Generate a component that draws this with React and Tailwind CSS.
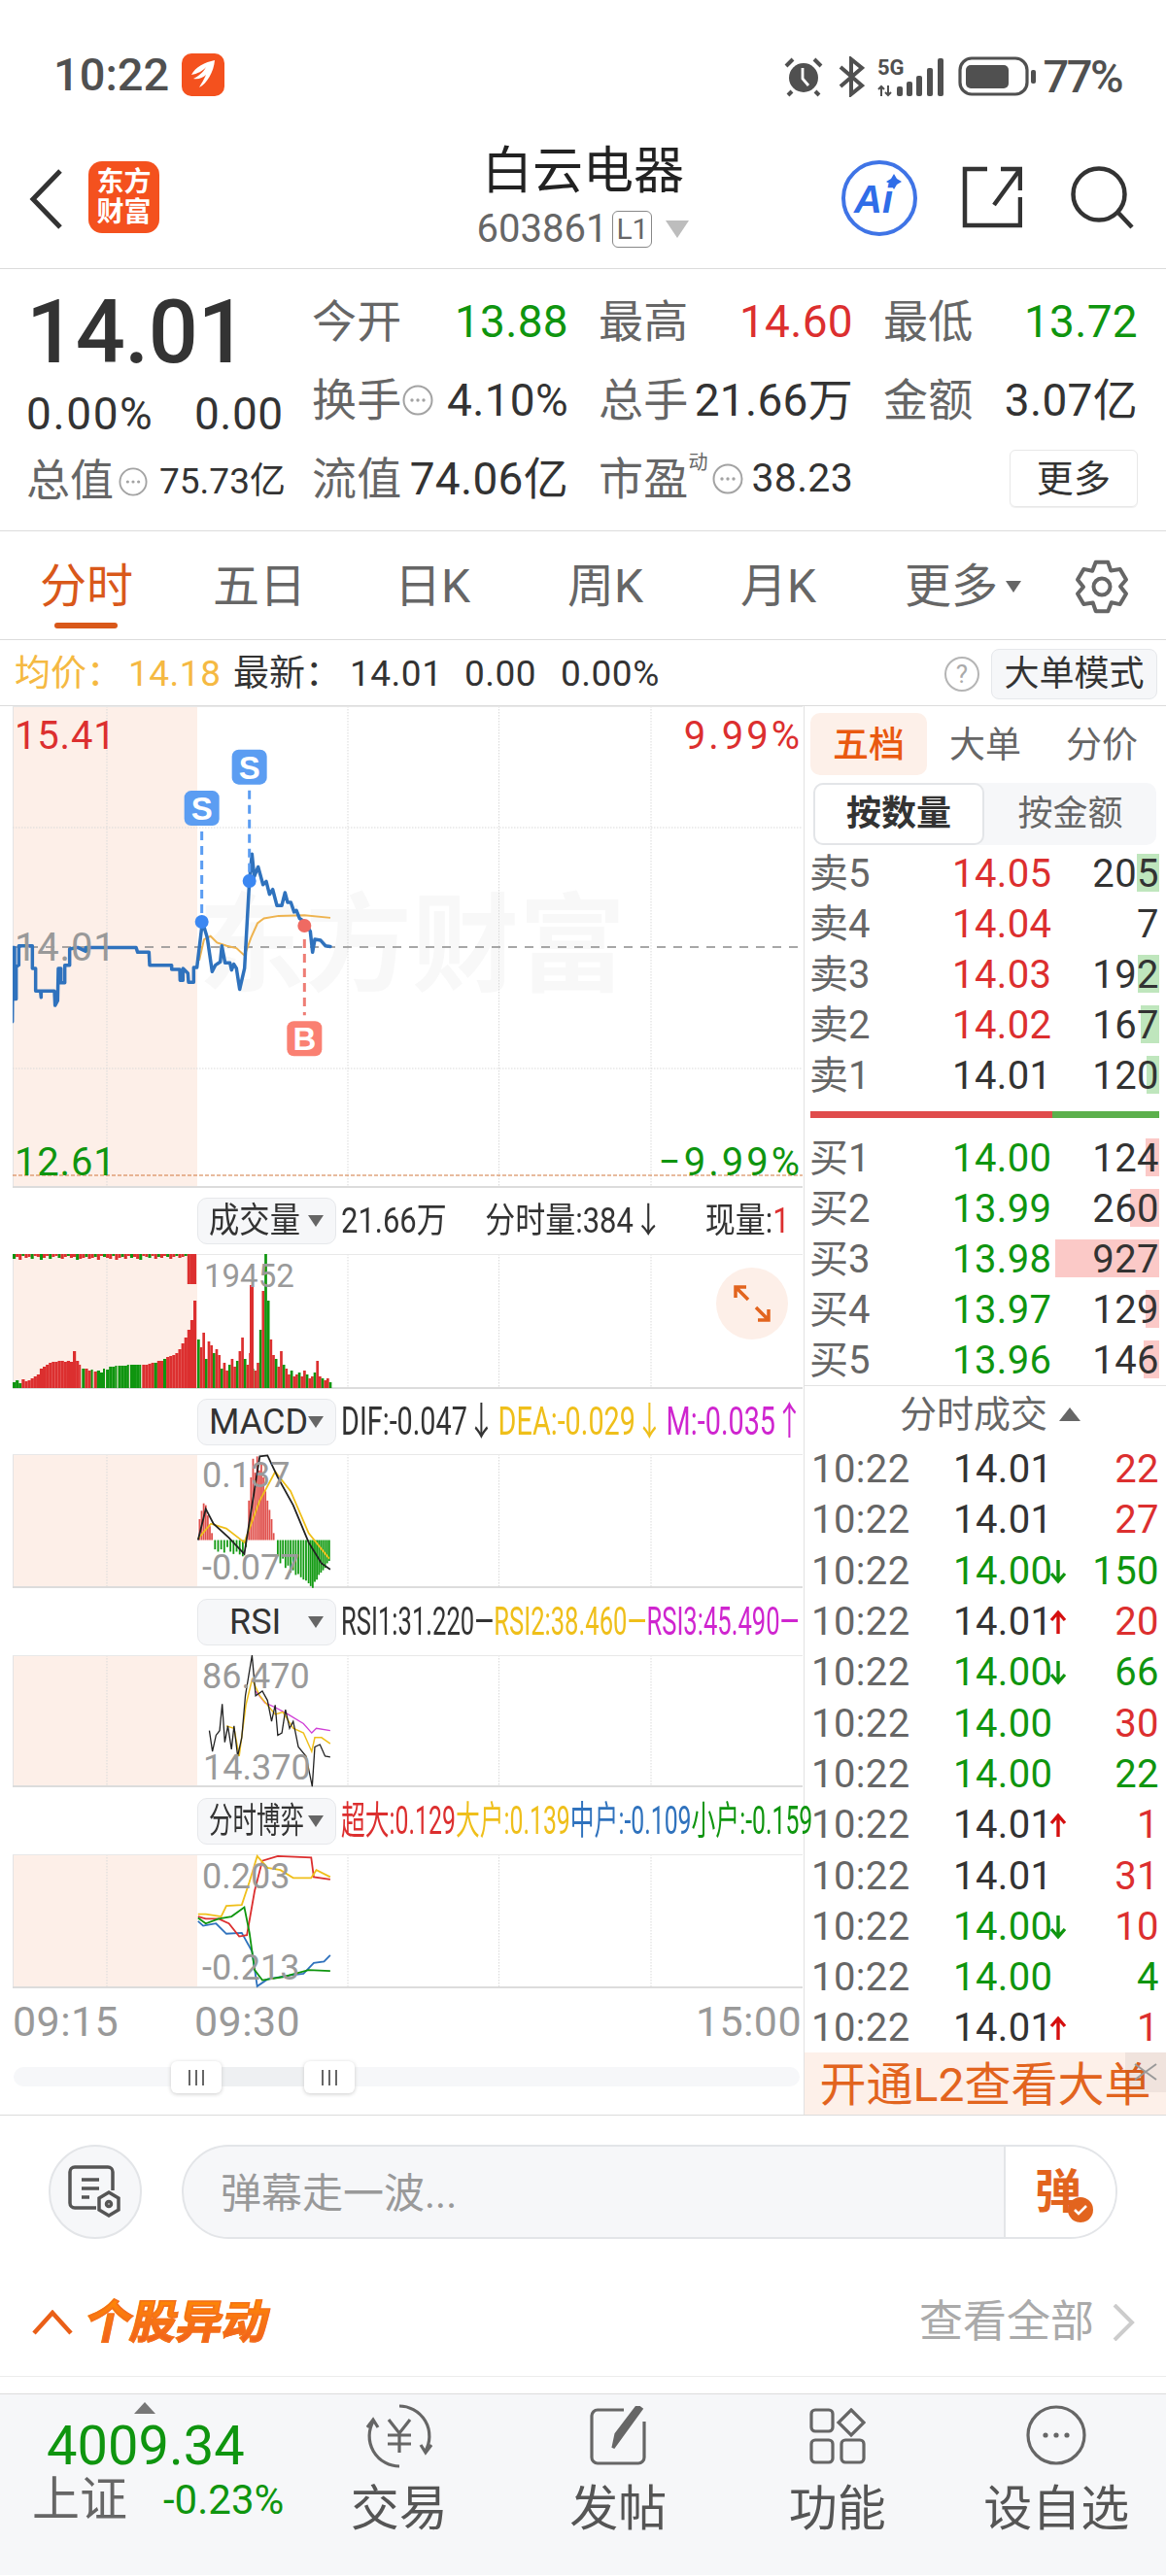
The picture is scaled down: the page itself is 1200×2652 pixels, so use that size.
const RED = "#dc2f2f";
const GREEN = "#0f950f";

const toPts = (arr, sx, sy, ox, oy) =>
  arr.map(([x, y]) => `${x / sx - ox},${y / sy - oy}`).join(" ");

const priceLine = [[38,1000],[40,770],[45,770],[45,930],[50,930],[50,830],[58,825],[58,765],[100,765],[100,835],[110,835],[110,905],[125,905],[127,925],[127,905],[168,905],[170,950],[178,935],[180,835],[188,835],[188,880],[200,880],[200,825],[215,825],[215,775],[240,770],[265,782],[265,770],[420,770],[425,785],[460,785],[462,825],[530,825],[530,838],[555,838],[556,872],[565,872],[565,835],[580,850],[582,878],[598,878],[598,832],[608,832],[625,690],[640,740],[655,845],[665,825],[680,815],[685,765],[695,818],[710,818],[715,840],[722,822],[730,835],[740,900],[755,835],[770,565],[778,480],[785,550],[797,520],[812,575],[822,565],[832,605],[842,590],[855,640],[870,640],[880,600],[888,630],[898,630],[908,660],[915,655],[925,680],[940,690],[958,720],[965,785],[972,745],[990,748],[1005,765],[1020,767]];
const avgLine = [[615,810],[630,745],[650,735],[670,755],[700,765],[730,772],[755,795],[775,740],[795,695],[815,680],[860,672],[940,670],[1020,678]];

const preVol = [6,8,5,9,7,8,10,12,14,20,22,24,26,27,27,28,28,27,28,27,38,28,24,20,20,18,19,17,18,16,20,19,22,22,23,23,23,23,24,24,24,24,24,24,24,25,26,26,28,28,30,32,33,34,36,40,46,52,60,70,90];
const postVol = [50,42,57,30,48,44,36,40,34,20,26,18,24,30,22,28,38,52,30,24,36,20,18,26,60,100,139,90,50,34,30,22,38,24,20,14,18,12,14,16,12,18,14,10,12,16,28,12,10,8,10,6];
const topMarks = [5,3,6,2,4,3,5,2,3,6,4,2,5,3,2,4,5,3,2,4,3,6,5,4,3,5,4,3,6,2,3,4,5,2,6,4,3,5,2,4,3,5,6,2,3,4,2,5,3,4,2,3,5,3,2,4,3,2,31,31,31];

const macdBlack = [[385,325],[400,258],[415,290],[445,320],[475,355],[490,250],[505,145],[520,143],[540,190],[570,250],[600,330],[625,375],[642,388]];
const macdYellow = [[385,322],[410,290],[440,300],[475,330],[505,240],[535,178],[565,220],[600,310],[640,365]];
const macdBars = [[388,280],[392,262],[396,246],[400,250],[404,272],[408,295],[412,310],[418,345],[424,350],[430,345],[436,352],[442,340],[448,350],[454,355],[460,350],[466,356],[472,360],[478,340],[484,240],[488,190],[492,150],[496,180],[500,145],[504,175],[508,160],[512,190],[516,220],[520,240],[524,260],[528,280],[532,310],[540,360],[545,375],[550,365],[555,385],[560,380],[565,395],[570,390],[575,400],[580,398],[585,405],[590,410],[595,412],[600,418],[604,424],[608,428],[612,415],[616,410],[620,400],[624,395],[628,390],[632,385],[636,375],[640,370]];

const rsiBlack = [[407,735],[413,780],[420,745],[427,735],[432,678],[437,760],[443,725],[450,775],[455,725],[462,790],[470,750],[477,660],[490,573],[497,660],[510,650],[520,670],[528,715],[535,680],[540,745],[548,740],[555,690],[563,730],[570,715],[580,770],[595,790],[607,855],[612,770],[622,765],[632,790],[642,792]];
const rsiYellow = [[440,725],[455,730],[465,790],[478,680],[490,625],[505,660],[520,680],[535,700],[550,695],[570,730],[590,740],[606,780],[612,750],[625,750],[642,763]];
const rsiPink = [[497,650],[515,675],[535,685],[560,700],[590,720],[606,740],[615,730],[642,735]];

const gameRed = [[385,1135],[400,1140],[425,1140],[445,1150],[465,1178],[480,1175],[495,1080],[510,1015],[540,1005],[605,1008],[610,1050],[642,1055]];
const gameYellow = [[385,1130],[400,1130],[430,1135],[440,1112],[470,1110],[485,1060],[500,1005],[520,1030],[545,1035],[570,1052],[605,1052],[615,1035],[642,1050]];
const gameBlue = [[385,1145],[395,1155],[420,1150],[440,1172],[470,1170],[490,1210],[500,1285],[520,1270],[560,1262],[590,1258],[610,1235],[630,1232],[642,1218]];
const gameGreen = [[385,1138],[400,1150],[425,1140],[450,1135],[475,1115],[485,1170],[495,1250],[510,1272],[550,1265],[600,1250],[642,1252]];

const sellRows = [
  { label: "卖5", price: "14.05", qty: "205", bar: 23, color: RED },
  { label: "卖4", price: "14.04", qty: "7", bar: 0, color: RED },
  { label: "卖3", price: "14.03", qty: "192", bar: 22, color: RED },
  { label: "卖2", price: "14.02", qty: "167", bar: 19, color: RED },
  { label: "卖1", price: "14.01", qty: "120", bar: 13, color: "#333" },
];
const buyRows = [
  { label: "买1", price: "14.00", qty: "124", bar: 14, color: GREEN },
  { label: "买2", price: "13.99", qty: "260", bar: 30, color: GREEN },
  { label: "买3", price: "13.98", qty: "927", bar: 107, color: GREEN },
  { label: "买4", price: "13.97", qty: "129", bar: 14, color: GREEN },
  { label: "买5", price: "13.96", qty: "146", bar: 16, color: GREEN },
];
const ticks = [
  { price: "14.01", up: true, qty: "22", arrow: "", qtyRed: true },
  { price: "14.01", up: true, qty: "27", arrow: "", qtyRed: true },
  { price: "14.00", up: false, qty: "150", arrow: "down", qtyRed: false },
  { price: "14.01", up: true, qty: "20", arrow: "up", qtyRed: true },
  { price: "14.00", up: false, qty: "66", arrow: "down", qtyRed: false },
  { price: "14.00", up: false, qty: "30", arrow: "", qtyRed: true },
  { price: "14.00", up: false, qty: "22", arrow: "", qtyRed: false },
  { price: "14.01", up: true, qty: "1", arrow: "up", qtyRed: true },
  { price: "14.01", up: true, qty: "31", arrow: "", qtyRed: true },
  { price: "14.00", up: false, qty: "10", arrow: "down", qtyRed: true },
  { price: "14.00", up: false, qty: "4", arrow: "", qtyRed: false },
  { price: "14.01", up: true, qty: "1", arrow: "up", qtyRed: true },
];

// six lobed settings gear
const gearPts = (() => {
  const out = [];
  for (let k = 0; k < 6; k++) {
    const a = k * 60 - 90;
    [[-31, 19], [-14, 26], [14, 26]].forEach(([d, r]) => {
      const t = ((a + d) * Math.PI) / 180;
      out.push(`${(28 + r * Math.cos(t)).toFixed(1)},${(28 + r * Math.sin(t)).toFixed(1)}`);
    });
  }
  return out.join(" ");
})();

function DotsIcon({ size = 32 }) {
  return (
    <svg width={size} height={size} viewBox="0 0 32 32" className="shrink-0">
      <circle cx="16" cy="16" r="14.5" fill="none" stroke="#a3a3a3" strokeWidth="2" />
      <circle cx="10" cy="16" r="1.7" fill="#a3a3a3" />
      <circle cx="16" cy="16" r="1.7" fill="#a3a3a3" />
      <circle cx="22" cy="16" r="1.7" fill="#a3a3a3" />
    </svg>
  );
}

function StatusIcons() {
  return (
    <div className="flex items-center">
      <svg width="40" height="42" viewBox="0 0 40 42">
        <circle cx="20" cy="22" r="15" fill="#505050" />
        <path d="M19 12v11l6 7" fill="none" stroke="#fff" strokeWidth="2.8" />
        <path d="M2 10 9 3M38 10l-7-7M8 36l-4 4M32 36l4 4" stroke="#505050" strokeWidth="4" fill="none" />
      </svg>
      <svg width="28" height="42" viewBox="0 0 28 42" className="ml-[15px]">
        <path d="M3 11 25 30 14 39V3l11 9L3 31" fill="none" stroke="#505050" strokeWidth="4" />
      </svg>
      <svg width="70" height="42" viewBox="0 0 70 42" className="ml-[13px]">
        <text x="0" y="19" fontSize="22" fontWeight="700" fill="#505050" fontFamily="Roboto">5G</text>
        <path d="M4 41V31M1 34l3-3 3 3M11 30v10M8 37l3 3 3-3" fill="none" stroke="#505050" strokeWidth="2" />
        <rect x="20" y="31" width="6" height="10" rx="2" fill="#505050" />
        <rect x="30" y="26" width="6" height="15" rx="2" fill="#505050" />
        <rect x="40" y="20" width="6" height="21" rx="2" fill="#505050" />
        <rect x="51" y="12" width="6" height="29" rx="2" fill="#505050" />
        <rect x="62" y="2" width="6" height="39" rx="2" fill="#505050" />
      </svg>
      <svg width="80" height="42" viewBox="0 0 80 42" className="ml-[13px]">
        <rect x="2" y="2" width="69" height="37" rx="12" fill="none" stroke="#505050" strokeWidth="3.2" />
        <rect x="8" y="9" width="44" height="24" rx="5" fill="#505050" />
        <rect x="75" y="14" width="5" height="14" rx="2" fill="#505050" />
      </svg>
      <span className="ml-[7px] text-[47px] font-medium leading-none tracking-[-2.5px] text-[#505050]">77%</span>
    </div>
  );
}

function Pane({ h, children }) {
  return (
    <svg width="813" height={h} viewBox={`0 0 813 ${h}`} className="relative block">
      <rect x="0" y="0" width="190" height={h} fill="#fdefe8" />
      {[97, 345, 500.5, 657].map((x) => (
        <line key={x} x1={x} y1="0" x2={x} y2={h} stroke="#d9d9d9" strokeWidth="1" strokeDasharray="1.5 1.5" />
      ))}
      <line x1="0.5" y1="0" x2="0.5" y2={h} stroke="#e4e4e4" />
      <line x1="0" y1="0.5" x2="813" y2="0.5" stroke="#e8e8e8" />
      <line x1="0" y1={h - 1} x2="813" y2={h - 1} stroke="#dcdcdc" strokeWidth="2" />
      {children}
    </svg>
  );
}

function Marker({ x, y, letter, color }) {
  return (
    <g>
      <rect x={x - 18} y={y - 18} width="36" height="36" rx="7" fill={color} />
      <text x={x} y={y + 12} textAnchor="middle" fontSize="33" fontWeight="700" fill="#fff" fontFamily="Liberation Sans">
        {letter}
      </text>
    </g>
  );
}

function MainChart() {
  const local = (x, y) => [x / 3 - 13, y / 3.015 - 7];
  const s1 = local(623, 338);
  const s2 = local(770, 210);
  const b = local(940, 1053);
  return (
    <div className="relative ml-[13px] h-[496px] w-[813px]">
      <span className="absolute left-[191px] top-[193px] text-[110px] font-bold leading-none text-[#f8f8f8]">东方财富</span>
      <Pane h={496}>
        {[125, 373].map((y) => (
          <line key={y} x1="0" y1={y} x2="813" y2={y} stroke="#d9d9d9" strokeDasharray="1.5 1.5" />
        ))}
        <line x1="0" y1="248" x2="813" y2="248" stroke="#8a8a8a" strokeWidth="1.5" strokeDasharray="9 8" />
        <line x1="0" y1="483" x2="813" y2="483" stroke="#d2793f" strokeWidth="1.2" strokeDasharray="4 2" />
        <polyline points={toPts(avgLine, 3, 3.015, 13, 7)} fill="none" stroke="#eeb34f" strokeWidth="2" />
        <polyline points={toPts(priceLine, 3, 3.015, 13, 7)} fill="none" stroke="#2f72bd" strokeWidth="3.5" strokeLinejoin="round" strokeLinecap="round" />
        <line x1={s1[0]} y1={s1[1] + 24} x2={s1[0]} y2="222" stroke="#5b9df2" strokeWidth="3" strokeDasharray="9 6" />
        <line x1={s2[0]} y1={s2[1] + 24} x2={s2[0]} y2="180" stroke="#5b9df2" strokeWidth="3" strokeDasharray="9 6" />
        <line x1={b[0]} y1="240" x2={b[0]} y2={b[1] - 24} stroke="#ee7d75" strokeWidth="3" strokeDasharray="9 6" />
        <circle cx={s1[0]} cy="222" r="7" fill="#3b87f2" />
        <circle cx={s2[0]} cy="180" r="7" fill="#3b87f2" />
        <circle cx={b[0]} cy="226" r="7" fill="#ef6a62" />
        <Marker x={s1[0]} y={s1[1]} letter="S" color="#5b9df2" />
        <Marker x={s2[0]} y={s2[1]} letter="S" color="#5b9df2" />
        <Marker x={b[0]} y={b[1]} letter="B" color="#fa8072" />
      </Pane>
      <span className="absolute left-[2px] top-[9px] text-[40px] leading-[44px] tracking-[0.8px] text-[#dc2f2f]">15.41</span>
      <span className="absolute right-0 top-[9px] text-[40px] leading-[44px] tracking-[3px] text-[#dc2f2f]">9.99%</span>
      <span className="absolute left-[2px] top-[227px] text-[40px] leading-[44px] tracking-[0.8px] text-[#999]">14.01</span>
      <span className="absolute left-[2px] top-[448px] text-[40px] leading-[44px] tracking-[0.8px] text-[#0f950f]">12.61</span>
      <span className="absolute right-0 top-[448px] text-[40px] leading-[44px] tracking-[3px] text-[#0f950f]">−9.99%</span>
    </div>
  );
}

function VolumeChart() {
  const h = 139;
  return (
    <div className="relative ml-[13px] h-[139px] w-[813px]">
      <Pane h={h}>
        {topMarks.map((v, i) => (
          <rect key={i} x={i * 3.1} y="0" width="3.1" height={v} fill={i % 3 === 0 && v < 31 ? GREEN : RED} />
        ))}
        {preVol.map((v, i) => (
          <rect
            key={i}
            x={i * 3.1}
            y={h - 1 - v}
            width={i >= 21 && i <= 42 && i % 4 === 2 ? 2 : 3.2}
            height={v}
            fill={(i >= 28 && i <= 42) || i < 3 || i === 23 || i === 26 || i === 47 || i === 50 ? GREEN : RED}
          />
        ))}
        {postVol.map((v, i) => (
          <rect
            key={i}
            x={190 + i * 2.66}
            y={h - 1 - v}
            width="2.7"
            height={v}
            fill={(i * 7) % 3 === 0 || i === 26 ? GREEN : RED}
          />
        ))}
        <rect x="244" y="32" width="4" height="106" fill={RED} />
      </Pane>
      <span className="absolute left-[197px] top-[3px] text-[33px] leading-[40px] text-[#9a9a9a]">19452</span>
      <div className="absolute left-[724px] top-[14px] flex h-[74px] w-[74px] items-center justify-center rounded-full bg-[#fdefe8]">
        <svg width="40" height="40" viewBox="0 0 40 40">
          <path d="M3 14V3h11M3 3l13 13M37 26v11H26M37 37 24 24" fill="none" stroke="#e2641e" strokeWidth="3.5" />
        </svg>
      </div>
    </div>
  );
}

function SubBar({ label, labelClass, h, children }) {
  return (
    <div className={`flex items-center pl-[203px] ${h}`}>
      <div className="flex h-[48px] w-[143px] shrink-0 items-center rounded-[10px] border border-[#e6e8eb] bg-[#f6f7f9] pl-[11px] pr-[9px]">
        <div className="w-[98px] shrink-0 whitespace-nowrap">
          <span className={`block w-fit text-[36px] leading-none text-[#333] ${labelClass}`}>{label}</span>
        </div>
        <svg width="16" height="12" viewBox="0 0 16 12" className="ml-[4px] shrink-0">
          <path d="M0 0h16L8 12z" fill="#666" />
        </svg>
      </div>
      <div className="ml-[5px] min-w-0 flex-1">{children}</div>
    </div>
  );
}

function SqueezedRow({ className, items }) {
  return (
    <div className={`flex w-max origin-left items-center whitespace-nowrap leading-none ${className}`}>
      {items.map((it, i) => (
        <span key={i} style={{ color: it.c, marginLeft: it.ml || 0 }}>
          {it.t}
        </span>
      ))}
    </div>
  );
}

function MacdChart() {
  return (
    <div className="relative ml-[13px] h-[138px] w-[813px]">
      <Pane h={138}>
        {macdBars.map(([x, y]) => {
          const lx = x / 1.889 - 13;
          const ly = y / 2.09 - 67;
          const zero = 325 / 2.09 - 67;
          return (
            <line
              key={x}
              x1={lx}
              x2={lx}
              y1={zero}
              y2={ly}
              stroke={y < 325 ? "#e0504c" : "#129a12"}
              strokeWidth="1.8"
            />
          );
        })}
        <polyline points={toPts(macdYellow, 1.889, 2.09, 13, 67)} fill="none" stroke="#efbf1a" strokeWidth="1.8" />
        <polyline points={toPts(macdBlack, 1.889, 2.09, 13, 67)} fill="none" stroke="#222" strokeWidth="1.8" />
      </Pane>
      <span className="absolute left-[195px] top-[2px] text-[36px] leading-[40px] text-[#9a9a9a]">0.137</span>
      <span className="absolute left-[195px] top-[97px] text-[36px] leading-[40px] text-[#9a9a9a]">-0.077</span>
    </div>
  );
}

function RsiChart() {
  return (
    <div className="relative ml-[13px] h-[136px] w-[813px]">
      <Pane h={136}>
        <polyline points={toPts(rsiPink, 1.889, 2.09, 13, 274)} fill="none" stroke="#cf3fd6" strokeWidth="1.3" />
        <polyline points={toPts(rsiYellow, 1.889, 2.09, 13, 274)} fill="none" stroke="#efbf1a" strokeWidth="1.5" />
        <polyline points={toPts(rsiBlack, 1.889, 2.09, 13, 274)} fill="none" stroke="#222" strokeWidth="1.3" />
      </Pane>
      <span className="absolute left-[195px] top-[2px] text-[36px] leading-[40px] text-[#9a9a9a]">86.470</span>
      <span className="absolute left-[196px] top-[96px] text-[36px] leading-[40px] text-[#9a9a9a]">14.370</span>
    </div>
  );
}

function GameChart() {
  return (
    <div className="relative ml-[13px] h-[138px] w-[813px]">
      <Pane h={138}>
        <polyline points={toPts(gameBlue, 1.889, 2.09, 13, 479)} fill="none" stroke="#2f72bd" strokeWidth="1.8" />
        <polyline points={toPts(gameRed, 1.889, 2.09, 13, 479)} fill="none" stroke="#dc2f2f" strokeWidth="1.8" />
        <polyline points={toPts(gameYellow, 1.889, 2.09, 13, 479)} fill="none" stroke="#efbf1a" strokeWidth="1.8" />
        <polyline points={toPts(gameGreen, 1.889, 2.09, 13, 479)} fill="none" stroke="#0f950f" strokeWidth="1.8" />
      </Pane>
      <span className="absolute left-[195px] top-[3px] text-[36px] leading-[40px] text-[#9a9a9a]">0.203</span>
      <span className="absolute left-[195px] top-[97px] text-[36px] leading-[40px] text-[#9a9a9a]">-0.213</span>
    </div>
  );
}

function DepthRow({ row }) {
  return (
    <div className="relative flex h-[52px] items-center pl-[5px] pr-[7px] pt-[2px] text-[40px] leading-none">
      {row.bar > 0 && (
        <div
          className={`absolute right-[7px] top-[6px] h-[39px] ${row.label[0] === "卖" ? "bg-[#bfe6bd]" : "bg-[#fbc9c7]"}`}
          style={{ width: row.bar }}
        />
      )}
      <span className="relative w-[147px] text-[#666]">{row.label}</span>
      <span className="relative tracking-[0.4px]" style={{ color: row.color }}>{row.price}</span>
      <span className="relative ml-auto tracking-[0.4px] text-[#333]">{row.qty}</span>
    </div>
  );
}

function TickArrow({ dir }) {
  if (!dir) return <span className="w-[18px]" />;
  const color = dir === "up" ? "#d50f0f" : GREEN;
  return (
    <svg width="18" height="26" viewBox="0 0 18 26">
      {dir === "up" ? (
        <path d="M9 25V3M2 11l7-8 7 8" fill="none" stroke={color} strokeWidth="3.4" />
      ) : (
        <path d="M9 1v22M2 15l7 8 7-8" fill="none" stroke={color} strokeWidth="3.4" />
      )}
    </svg>
  );
}

export default function App() {
  return (
    <div className="h-[2652px] w-[1200px] bg-white font-[family-name:Roboto,'Noto_Sans_CJK_SC',sans-serif] text-[#333]">
      {/* status bar */}
      <div className="flex h-[130px] items-start justify-between pl-[55px] pr-[46px] pt-[55px]">
        <div className="flex items-center">
          <span className="text-[47px] font-medium leading-[44px] text-[#505050]">10:22</span>
          <div className="ml-[13px] flex h-[44px] w-[44px] items-center justify-center rounded-[10px] bg-[#f4511e]">
            <svg width="30" height="32" viewBox="0 0 30 32">
              <path d="M27 1C17 3 7 8 3 16c6-1 12-4 15-8-3 6-9 10-13 12 5 1 10-1 13-4-2 5-5 9-7 13 8-4 15-16 16-28z" fill="#fff" />
            </svg>
          </div>
        </div>
        <StatusIcons />
      </div>

      {/* header */}
      <div className="grid h-[147px] grid-cols-[1fr_auto_1fr] border-b border-[#dcdcdc]">
        <div className="flex items-start pl-[30px] pt-[36px]">
          <svg width="36" height="62" viewBox="0 0 36 62" className="mt-[8px]">
            <path d="M32 2 4 31l28 29" fill="none" stroke="#333" strokeWidth="5" />
          </svg>
          <div className="ml-[25px] flex h-[74px] w-[73px] flex-col items-center justify-center rounded-[14px] bg-[#f4511e] text-[28px] font-bold leading-[31px] text-white">
            <span>东方</span>
            <span>财富</span>
          </div>
        </div>
        <div className="flex flex-col items-center pt-[19px]">
          <span className="text-[52px] leading-[56px] text-[#222]">白云电器</span>
          <div className="mt-[9px] flex items-center">
            <span className="text-[40px] leading-[44px] text-[#666]">603861</span>
            <span className="ml-[5px] rounded-[6px] border border-[#888] px-[3px] text-[30px] leading-[36px] text-[#666]">L1</span>
            <svg width="24" height="18" viewBox="0 0 24 18" className="ml-[14px]">
              <path d="M0 0h24L12 18z" fill="#bdbdbd" />
            </svg>
          </div>
        </div>
        <div className="flex items-start justify-end pr-[32px] pt-[34px]">
          <svg width="78" height="80" viewBox="0 0 78 80">
            <circle cx="39" cy="40" r="37" fill="none" stroke="#3f74e6" strokeWidth="4" />
            <text x="13" y="55" fontSize="40" fontWeight="900" fontStyle="italic" fill="#2f6de8" fontFamily="Liberation Sans">Ai</text>
            <path d="M54 15l3 5 5 3-5 3-3 5-3-5-5-3 5-3z" fill="#2f6de8" />
          </svg>
          <svg width="62" height="64" viewBox="0 0 62 64" className="ml-[46px] mt-[7px]">
            <path d="M26 3H3v58h57V32M60 3 33 40M40 3h20v22" fill="none" stroke="#333" strokeWidth="4.5" />
          </svg>
          <svg width="66" height="66" viewBox="0 0 66 66" className="ml-[50px] mt-[7px]">
            <circle cx="29" cy="29" r="26.5" fill="none" stroke="#333" strokeWidth="4.5" />
            <path d="M48 47 63 63" stroke="#333" strokeWidth="4.5" />
          </svg>
        </div>
      </div>

      {/* quote */}
      <div className="flex h-[270px] border-b border-[#dcdcdc] leading-none">
        <div className="w-[321px] pl-[27px] pt-[25px]">
          <div className="text-[90px] font-medium leading-[82px] tracking-[-0.5px] text-[#333]">14.01</div>
          <div className="mt-[18px] flex text-[46px] leading-[48px]">
            <span className="w-[173px] tracking-[1.6px]">0.00%</span>
            <span className="tracking-[0.5px]">0.00</span>
          </div>
          <div className="mt-[22px] flex items-center text-[#666]">
            <span className="text-[45px] leading-[48px]">总值</span>
            <span className="ml-[5px]"><DotsIcon size={30} /></span>
            <span className="ml-[12px] text-[37px] leading-[48px] text-[#333]">75.73亿</span>
          </div>
        </div>
        <div className="grid w-[849px] grid-cols-[264px_262px_262px] grid-rows-[81px_81px_81px] gap-x-[31px] pt-[13px] text-[46px] tracking-[0.3px]">
          <div className="flex items-center justify-between">
            <span className="text-[#666]">今开</span>
            <span className="text-[#0f950f]">13.88</span>
          </div>
          <div className="flex items-center justify-between">
            <span className="text-[#666]">最高</span>
            <span className="text-[#dc2f2f]">14.60</span>
          </div>
          <div className="flex items-center justify-between">
            <span className="text-[#666]">最低</span>
            <span className="text-[#0f950f]">13.72</span>
          </div>
          <div className="flex items-center">
            <span className="text-[#666]">换手</span>
            <DotsIcon />
            <span className="ml-auto">4.10%</span>
          </div>
          <div className="flex items-center justify-between">
            <span className="text-[#666]">总手</span>
            <span>21.66万</span>
          </div>
          <div className="flex items-center justify-between">
            <span className="text-[#666]">金额</span>
            <span>3.07亿</span>
          </div>
          <div className="flex items-center justify-between">
            <span className="text-[#666]">流值</span>
            <span>74.06亿</span>
          </div>
          <div className="flex items-center">
            <span className="text-[#666]">市盈</span>
            <span className="mb-[34px] w-[24px] text-[20px] text-[#666]">动</span>
            <DotsIcon />
            <span className="ml-auto text-[41px]">38.23</span>
          </div>
          <div className="flex items-center justify-end">
            <div className="flex h-[59px] w-[132px] items-center justify-center rounded-[6px] border border-[#e8e8e8] text-[38px] shadow-[0_1px_1px_#eee]">更多</div>
          </div>
        </div>
      </div>

      {/* tabs */}
      <div className="grid h-[112px] grid-cols-[178px_178px_178px_178px_178px_178px_1fr] items-center border-b border-[#dcdcdc] pt-[3px] text-[48px] text-[#666]">
        <div className="relative text-center text-[#d9581a]">
          分时
          <div className="absolute left-[56px] top-[73px] h-[6px] w-[65px] rounded-full bg-[#d9581a]" />
        </div>
        <div className="text-center">五日</div>
        <div className="text-center">日K</div>
        <div className="text-center">周K</div>
        <div className="text-center">月K</div>
        <div className="flex items-center justify-center pl-[24px]">
          更多
          <svg width="16" height="12" viewBox="0 0 16 12" className="ml-[8px]">
            <path d="M0 0h16L8 12z" fill="#666" />
          </svg>
        </div>
        <svg width="56" height="56" viewBox="0 0 56 56" fill="none" stroke="#666" strokeWidth="4" strokeLinejoin="round" className="ml-[38px]">
          <polygon points={gearPts} />
          <circle cx="28" cy="28" r="8.5" />
        </svg>
      </div>

      {/* info row */}
      <div className="flex h-[68px] items-center border-b border-[#dcdcdc] pl-[15px] pr-[9px] pt-[2px] text-[37px] leading-none">
        <span className="w-[117px] text-[#f5b942]">均价：</span>
        <span className="w-[108px] tracking-[0.5px] text-[#f5b942]">14.18</span>
        <span className="w-[120px]">最新：</span>
        <span className="w-[118px] tracking-[0.5px]">14.01</span>
        <span className="w-[99px] tracking-[0.5px]">0.00</span>
        <span className="tracking-[0.5px]">0.00%</span>
        <div className="ml-auto flex h-[36px] w-[36px] items-center justify-center rounded-full border-2 border-[#b5b5b5] text-[26px] text-[#aaa]">?</div>
        <div className="ml-[12px] flex h-[52px] w-[171px] items-center justify-center rounded-[8px] border border-[#e6e8eb] bg-[#f6f7f9] text-[36px]">大单模式</div>
      </div>

      {/* body */}
      <div className="flex h-[1451px] border-b border-[#dcdcdc]">
        <div className="w-[827px] shrink-0">
          <MainChart />
          <SubBar label="成交量" labelClass="origin-left scale-x-[0.87]" h="h-[68px]">
            <SqueezedRow
              className="scale-x-[0.86] text-[36px]"
              items={[
                { t: "21.66万", c: "#333" },
                { t: "分时量:384↓", c: "#333", ml: 46 },
                { t: "现量:", c: "#333", ml: 50 },
                { t: "1", c: RED },
              ]}
            />
          </SubBar>
          <VolumeChart />
          <SubBar label="MACD" h="h-[67px]">
            <SqueezedRow
              className="scale-x-[0.72] text-[40px]"
              items={[
                { t: "DIF:-0.047↓", c: "#333" },
                { t: "DEA:-0.029↓", c: "#efbf1a", ml: 4 },
                { t: "M:-0.035↑", c: "#cf25cf", ml: 4 },
              ]}
            />
          </SubBar>
          <MacdChart />
          <SubBar label="RSI" labelClass="ml-[21px]" h="h-[69px]">
            <SqueezedRow
              className="scale-x-[0.64] text-[40px]"
              items={[
                { t: "RSI1:31.220—", c: "#333" },
                { t: "RSI2:38.460—", c: "#efbf1a" },
                { t: "RSI3:45.490—", c: "#cf25cf" },
              ]}
            />
          </SubBar>
          <RsiChart />
          <SubBar label="分时博弈" labelClass="origin-left scale-x-[0.68]" h="h-[69px]">
            <SqueezedRow
              className="scale-x-[0.62] text-[40px]"
              items={[
                { t: "超大:0.129", c: RED },
                { t: "大户:0.139", c: "#efbf1a" },
                { t: "中户:-0.109", c: "#2f72bd" },
                { t: "小户:-0.159", c: GREEN },
              ]}
            />
          </SubBar>
          <GameChart />

          {/* time axis */}
          <div className="flex h-[68px] items-center pl-[13px] pr-[2px] text-[43px] leading-none tracking-[0.4px] text-[#999]">
            <span className="w-[187px]">09:15</span>
            <span>09:30</span>
            <span className="ml-auto">15:00</span>
          </div>
          <div className="relative ml-[14px] mt-[13px] h-[20px] w-[809px] rounded-full bg-[#f6f7f9]">
            <div className="absolute left-[188px] top-0 h-[20px] w-[136px] bg-[#eef0f2]" />
            {[162, 299].map((x) => (
              <div
                key={x}
                className="absolute top-[-6px] flex h-[33px] w-[52px] items-center justify-center gap-[5px] rounded-[6px] bg-white shadow-[0_1px_4px_#ccc]"
                style={{ left: x }}
              >
                <span className="h-[16px] w-[2px] bg-[#666]" />
                <span className="h-[16px] w-[2px] bg-[#666]" />
                <span className="h-[16px] w-[2px] bg-[#666]" />
              </div>
            ))}
          </div>
        </div>

        {/* order book */}
        <div className="flex w-[373px] flex-col border-l border-[#e2e2e2]">
          <div className="flex h-[75px] items-start pl-[6px] pt-[7px] text-[37px] leading-none text-[#666]">
            <div className="flex h-[64px] w-[120px] items-center justify-center rounded-[10px] bg-[#fdf0e9] pt-[2px] font-medium text-[#e9590f]">五档</div>
            <div className="flex h-[64px] w-[120px] items-center justify-center pt-[2px]">大单</div>
            <div className="flex h-[64px] w-[120px] items-center justify-center pt-[2px]">分价</div>
          </div>
          <div className="ml-[9px] mt-[4px] flex h-[64px] w-[353px] rounded-[10px] bg-[#f6f7f9] text-[36px] leading-none">
            <div className="flex w-[176px] items-center justify-center rounded-[10px] border-2 border-[#e3e5e8] bg-white font-bold text-[#333]">按数量</div>
            <div className="flex flex-1 items-center justify-center text-[#666]">按金额</div>
          </div>
          <div className="mt-[3px]">
            {sellRows.map((row) => (
              <DepthRow key={row.label} row={row} />
            ))}
          </div>
          <div className="ml-[6px] mt-[11px] flex h-[7px] w-[359px]">
            <div className="w-[249px] bg-[#e04c4c]" />
            <div className="flex-1 bg-[#5cb04c]" />
          </div>
          <div className="mt-[15px]">
            {buyRows.map((row) => (
              <DepthRow key={row.label} row={row} />
            ))}
          </div>
          <div className="flex h-[59px] items-center justify-center border-t border-[#e2e2e2] pl-[10px] text-[38px] leading-none text-[#666]">
            分时成交
            <svg width="22" height="14" viewBox="0 0 22 14" className="ml-[12px]">
              <path d="M11 0l11 14H0z" fill="#666" />
            </svg>
          </div>
          <div className="flex flex-col">
            {ticks.map((t, i) => (
              <div key={i} className="flex h-[52.3px] items-center pl-[7px] pr-[7px] pt-[4px] text-[40px] leading-none">
                <span className="w-[146px] tracking-[0.4px] text-[#666]">10:22</span>
                <span className="w-[99px] tracking-[0.4px]" style={{ color: t.up ? "#333" : GREEN }}>{t.price}</span>
                <TickArrow dir={t.arrow} />
                <span className="ml-auto tracking-[0.4px]" style={{ color: t.qtyRed ? RED : GREEN }}>{t.qty}</span>
              </div>
            ))}
          </div>
          <div className="relative flex flex-1 items-center justify-center bg-[#fdf0e9] pt-[4px] text-[48px] leading-none text-[#e2641e]">
            开通L2查看大单
            <div className="absolute right-0 top-0 flex h-[41px] w-[42px] items-center justify-center bg-black/5">
              <svg width="26" height="18" viewBox="0 0 26 18">
                <path d="M2 1l22 16M24 1 2 17" stroke="#999" strokeWidth="2" />
              </svg>
            </div>
          </div>
        </div>
      </div>

      {/* danmu input */}
      <div className="flex h-[150px] items-start pl-[50px] pt-[30px]">
        <div className="flex h-[97px] w-[96px] items-center justify-center rounded-full border-2 border-[#e3e5e8] bg-[#f6f7f9]">
          <svg width="58" height="56" viewBox="0 0 58 56" fill="none" stroke="#555" strokeWidth="3.5">
            <path d="M30 44H8a5 5 0 0 1-5-5V7a5 5 0 0 1 5-5h34a5 5 0 0 1 5 5v19" />
            <path d="M15 15h18M15 24h18M15 33h8" />
            <path d="M43 28l10 6v12l-10 6-10-6V34z" />
            <circle cx="43" cy="40" r="2.5" />
          </svg>
        </div>
        <div className="ml-[41px] flex h-[97px] w-[963px] items-stretch rounded-full border-2 border-[#e3e5e8] bg-[#f6f7f9]">
          <span className="flex flex-1 items-center pl-[38px] pt-[4px] text-[42px] leading-none text-[#999]">弹幕走一波...</span>
          <div className="relative flex w-[115px] items-center rounded-r-full border-l-2 border-[#e3e5e8] bg-white pl-[30px]">
            <span className="text-[48px] font-bold leading-none text-[#e2641e]">弹</span>
            <div className="absolute left-[64px] top-[52px] flex h-[26px] w-[26px] items-center justify-center rounded-full bg-[#e2641e]">
              <svg width="16" height="14" viewBox="0 0 16 14">
                <path d="M2 7l4 4 8-8" fill="none" stroke="#fff" strokeWidth="2.6" />
              </svg>
            </div>
          </div>
        </div>
      </div>

      {/* section title */}
      <div className="flex h-[119px] items-start justify-between border-b border-[#ececec] pl-[33px] pr-[32px] pt-[36px]">
        <div className="flex items-center">
          <svg width="42" height="26" viewBox="0 0 42 26">
            <path d="M2 24 21 3l19 21" fill="none" stroke="#ea5f17" strokeWidth="4.5" />
          </svg>
          <span className="ml-[14px] -skew-x-12 bg-linear-to-b from-[#ff8a00] to-[#ef5a1c] bg-clip-text text-[47px] font-bold leading-[54px] text-transparent [-webkit-text-stroke:1.5px_#f4701a]">个股异动</span>
        </div>
        <div className="flex items-center">
          <span className="text-[45px] leading-[54px] text-[#aaa]">查看全部</span>
          <svg width="24" height="38" viewBox="0 0 24 38" className="ml-[18px]">
            <path d="M3 1l18 18L3 37" fill="none" stroke="#ccc" strokeWidth="4" />
          </svg>
        </div>
      </div>

      <div className="h-[17px]" />

      {/* bottom bar */}
      <div className="grid h-[187px] grid-cols-[298px_1fr_1fr_1fr_1fr] border-t border-[#dcdcdc] bg-[#f6f7f9]">
        <div className="relative pl-[33px]">
          <svg width="22" height="12" viewBox="0 0 22 12" className="absolute left-[138px] top-[8px]">
            <path d="M11 0l11 12H0z" fill="#777" />
          </svg>
          <div className="ml-[15px] mt-[25px] text-[56px] leading-[56px] text-[#0f950f]">4009.34</div>
          <div className="mt-[1px] flex items-center">
            <span className="text-[49px] leading-[54px] text-[#666]">上证</span>
            <span className="ml-[37px] text-[42px] leading-none text-[#0f950f]">-0.23%</span>
          </div>
        </div>
        <div className="flex flex-col items-center pt-[10px]">
          <svg width="72" height="66" viewBox="0 0 72 66" fill="none" stroke="#666" strokeWidth="3.2">
            <path d="M36 2a31 31 0 0 1 27 46M36 64A31 31 0 0 1 9 18" />
            <path d="M3 24l6-8 5 8M69 42l-6 8-5-8" />
            <path d="M25 16l11 14 11-14M36 30v20M24 32h24M24 41h24" />
          </svg>
          <span className="mt-[17px] text-[50px] leading-[50px] text-[#555]">交易</span>
        </div>
        <div className="flex flex-col items-center pt-[12px]">
          <svg width="60" height="62" viewBox="0 0 60 62" fill="none" stroke="#666" strokeWidth="3.2">
            <path d="M36 4H9a6 6 0 0 0-6 6v43a6 6 0 0 0 6 6h42a6 6 0 0 0 6-6V16" />
            <path d="M54 3 25 43l3-14L50 0z" fill="#666" />
          </svg>
          <span className="mt-[19px] text-[50px] leading-[50px] text-[#555]">发帖</span>
        </div>
        <div className="flex flex-col items-center pt-[14px]">
          <svg width="58" height="58" viewBox="0 0 58 58" fill="none" stroke="#666" strokeWidth="3.2">
            <rect x="2" y="2" width="22" height="22" rx="4" />
            <path d="M43 2 56 15 43 28 30 15z" />
            <rect x="2" y="33" width="22" height="23" rx="4" />
            <rect x="33" y="33" width="23" height="23" rx="4" />
          </svg>
          <span className="mt-[21px] text-[50px] leading-[50px] text-[#555]">功能</span>
        </div>
        <div className="flex flex-col items-center pt-[11px]">
          <svg width="62" height="62" viewBox="0 0 62 62" fill="none" stroke="#666" strokeWidth="3.2">
            <circle cx="31" cy="31" r="29" />
            <circle cx="20" cy="31" r="2.6" fill="#666" stroke="none" />
            <circle cx="31" cy="31" r="2.6" fill="#666" stroke="none" />
            <circle cx="42" cy="31" r="2.6" fill="#666" stroke="none" />
          </svg>
          <span className="mt-[20px] text-[50px] leading-[50px] text-[#555]">设自选</span>
        </div>
      </div>
    </div>
  );
}
